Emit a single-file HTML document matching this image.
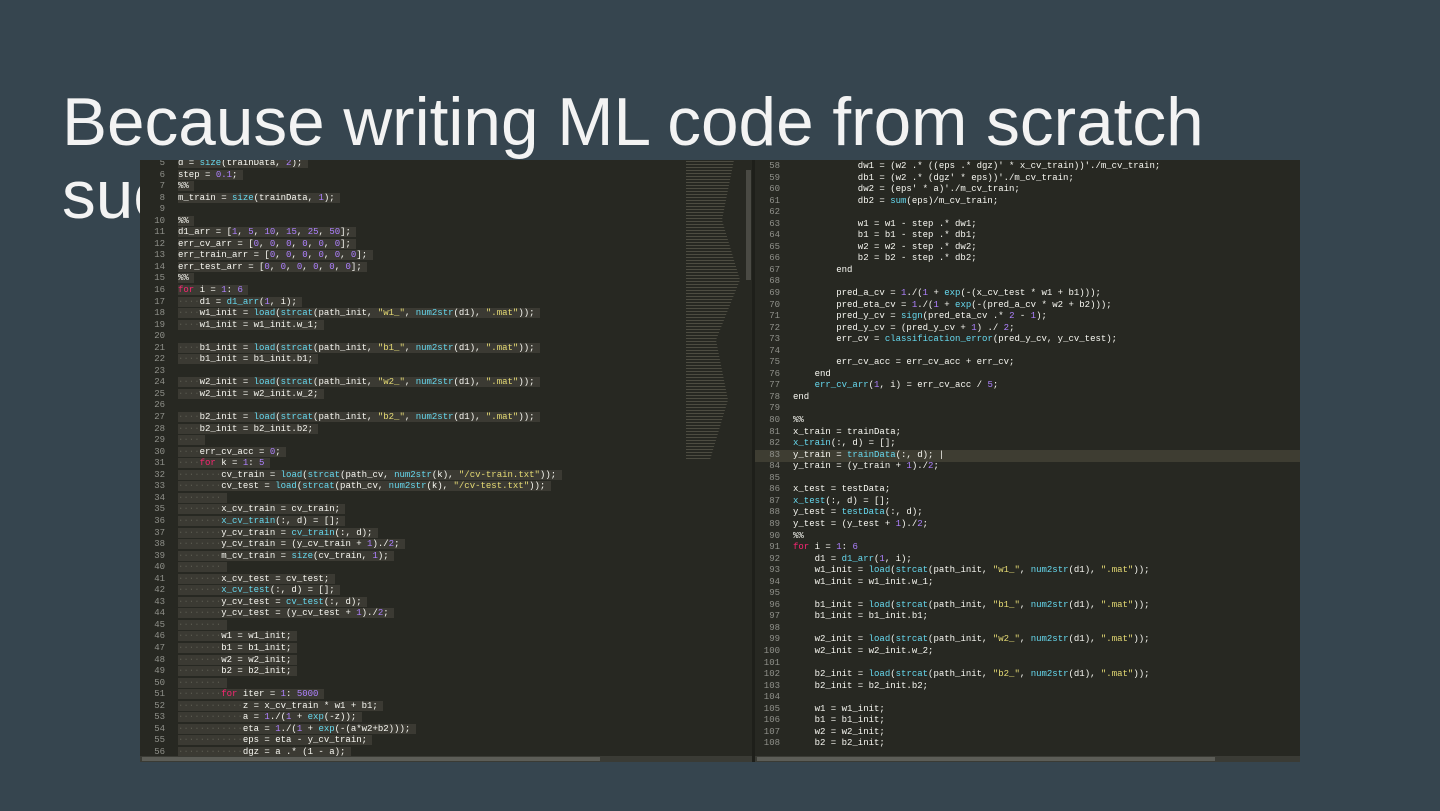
<!DOCTYPE html>
<html><head><meta charset="utf-8"><style>
html,body{margin:0;padding:0;width:1440px;height:811px;overflow:hidden;background:#36454f;}
.title{position:absolute;left:62px;top:86px;font:67.5px/73px "Liberation Sans",sans-serif;color:#f3f3f3;white-space:nowrap;}
.shot{position:absolute;left:140px;top:160px;width:1160px;height:602px;background:#272822;overflow:hidden;}
.pane{position:absolute;top:0;height:602px;overflow:hidden;background:#272822;}
pre{margin:0;font:9px/11.55px "Liberation Mono",monospace;color:#f8f8f2;position:absolute;white-space:pre;}
.ln{color:#8f908a;text-align:right;}
.f{color:#66d9ef}.n{color:#ae81ff}.s{color:#e6db74}.k{color:#f92672}.d{color:#5a5a50}
.sl{background:#3b3a33;}
</style></head><body>
<div class="title">Because writing ML code from scratch<br>suc</div>
<div class="shot">
 <div class="pane" style="left:0;width:612px;">
  <pre class="ln" style="left:0;width:25px;top:-2px;">5
6
7
8
9
10
11
12
13
14
15
16
17
18
19
20
21
22
23
24
25
26
27
28
29
30
31
32
33
34
35
36
37
38
39
40
41
42
43
44
45
46
47
48
49
50
51
52
53
54
55
56</pre>
  <pre style="left:38px;top:-2px;"><span class="sl">d = <span class="f">size</span>(trainData, <span class="n">2</span>); </span>
<span class="sl">step = <span class="n">0.1</span>; </span>
<span class="sl">%% </span>
<span class="sl">m_train = <span class="f">size</span>(trainData, <span class="n">1</span>); </span>

<span class="sl">%% </span>
<span class="sl">d1_arr = [<span class="n">1</span>, <span class="n">5</span>, <span class="n">10</span>, <span class="n">15</span>, <span class="n">25</span>, <span class="n">50</span>]; </span>
<span class="sl">err_cv_arr = [<span class="n">0</span>, <span class="n">0</span>, <span class="n">0</span>, <span class="n">0</span>, <span class="n">0</span>, <span class="n">0</span>]; </span>
<span class="sl">err_train_arr = [<span class="n">0</span>, <span class="n">0</span>, <span class="n">0</span>, <span class="n">0</span>, <span class="n">0</span>, <span class="n">0</span>]; </span>
<span class="sl">err_test_arr = [<span class="n">0</span>, <span class="n">0</span>, <span class="n">0</span>, <span class="n">0</span>, <span class="n">0</span>, <span class="n">0</span>]; </span>
<span class="sl">%% </span>
<span class="sl"><span class="k">for</span> i = <span class="n">1</span>: <span class="n">6</span> </span>
<span class="sl"><span class="d">····</span>d1 = <span class="f">d1_arr</span>(<span class="n">1</span>, i); </span>
<span class="sl"><span class="d">····</span>w1_init = <span class="f">load</span>(<span class="f">strcat</span>(path_init, <span class="s">"w1_"</span>, <span class="f">num2str</span>(d1), <span class="s">".mat"</span>)); </span>
<span class="sl"><span class="d">····</span>w1_init = w1_init.w_1; </span>

<span class="sl"><span class="d">····</span>b1_init = <span class="f">load</span>(<span class="f">strcat</span>(path_init, <span class="s">"b1_"</span>, <span class="f">num2str</span>(d1), <span class="s">".mat"</span>)); </span>
<span class="sl"><span class="d">····</span>b1_init = b1_init.b1; </span>

<span class="sl"><span class="d">····</span>w2_init = <span class="f">load</span>(<span class="f">strcat</span>(path_init, <span class="s">"w2_"</span>, <span class="f">num2str</span>(d1), <span class="s">".mat"</span>)); </span>
<span class="sl"><span class="d">····</span>w2_init = w2_init.w_2; </span>

<span class="sl"><span class="d">····</span>b2_init = <span class="f">load</span>(<span class="f">strcat</span>(path_init, <span class="s">"b2_"</span>, <span class="f">num2str</span>(d1), <span class="s">".mat"</span>)); </span>
<span class="sl"><span class="d">····</span>b2_init = b2_init.b2; </span>
<span class="sl"><span class="d">····</span> </span>
<span class="sl"><span class="d">····</span>err_cv_acc = <span class="n">0</span>; </span>
<span class="sl"><span class="d">····</span><span class="k">for</span> k = <span class="n">1</span>: <span class="n">5</span> </span>
<span class="sl"><span class="d">········</span>cv_train = <span class="f">load</span>(<span class="f">strcat</span>(path_cv, <span class="f">num2str</span>(k), <span class="s">"/cv-train.txt"</span>)); </span>
<span class="sl"><span class="d">········</span>cv_test = <span class="f">load</span>(<span class="f">strcat</span>(path_cv, <span class="f">num2str</span>(k), <span class="s">"/cv-test.txt"</span>)); </span>
<span class="sl"><span class="d">········</span> </span>
<span class="sl"><span class="d">········</span>x_cv_train = cv_train; </span>
<span class="sl"><span class="d">········</span><span class="f">x_cv_train</span>(:, d) = []; </span>
<span class="sl"><span class="d">········</span>y_cv_train = <span class="f">cv_train</span>(:, d); </span>
<span class="sl"><span class="d">········</span>y_cv_train = (y_cv_train + <span class="n">1</span>)./<span class="n">2</span>; </span>
<span class="sl"><span class="d">········</span>m_cv_train = <span class="f">size</span>(cv_train, <span class="n">1</span>); </span>
<span class="sl"><span class="d">········</span> </span>
<span class="sl"><span class="d">········</span>x_cv_test = cv_test; </span>
<span class="sl"><span class="d">········</span><span class="f">x_cv_test</span>(:, d) = []; </span>
<span class="sl"><span class="d">········</span>y_cv_test = <span class="f">cv_test</span>(:, d); </span>
<span class="sl"><span class="d">········</span>y_cv_test = (y_cv_test + <span class="n">1</span>)./<span class="n">2</span>; </span>
<span class="sl"><span class="d">········</span> </span>
<span class="sl"><span class="d">········</span>w1 = w1_init; </span>
<span class="sl"><span class="d">········</span>b1 = b1_init; </span>
<span class="sl"><span class="d">········</span>w2 = w2_init; </span>
<span class="sl"><span class="d">········</span>b2 = b2_init; </span>
<span class="sl"><span class="d">········</span> </span>
<span class="sl"><span class="d">········</span><span class="k">for</span> iter = <span class="n">1</span>: <span class="n">5000</span> </span>
<span class="sl"><span class="d">············</span>z = x_cv_train * w1 + b1; </span>
<span class="sl"><span class="d">············</span>a = <span class="n">1</span>./(<span class="n">1</span> + <span class="f">exp</span>(-z)); </span>
<span class="sl"><span class="d">············</span>eta = <span class="n">1</span>./(<span class="n">1</span> + <span class="f">exp</span>(-(a*w2+b2))); </span>
<span class="sl"><span class="d">············</span>eps = eta - y_cv_train; </span>
<span class="sl"><span class="d">············</span>dgz = a .* (1 - a); </span></pre>
  <div style="position:absolute;left:546px;top:0;width:60px;height:300px;opacity:.55;background:repeating-linear-gradient(#272822 0 1px,#6c6a5a 1px 2px,#272822 2px 3px);clip-path:polygon(0 0,80% 0,60% 20%,90% 40%,50% 60%,70% 80%,40% 100%,0 100%);"></div>
  <div style="position:absolute;left:606px;top:10px;width:5px;height:110px;background:#4a4a44;"></div>
  <div style="position:absolute;left:0;top:596px;width:612px;height:6px;background:#3a3b35;"></div>
  <div style="position:absolute;left:2px;top:597px;width:458px;height:4px;background:#5c5d57;"></div>
 </div>
 <div style="position:absolute;left:612px;top:0;width:3px;height:602px;background:#1e1f1a;"></div>
 <div class="pane" style="left:615px;width:545px;">
  <div style="position:absolute;left:0;top:290px;width:545px;height:12px;background:#3e3d32;"></div>
  <pre class="ln" style="left:0;width:25px;top:1px;">58
59
60
61
62
63
64
65
66
67
68
69
70
71
72
73
74
75
76
77
78
79
80
81
82
83
84
85
86
87
88
89
90
91
92
93
94
95
96
97
98
99
100
101
102
103
104
105
106
107
108</pre>
  <pre style="left:38px;top:1px;">            dw1 = (w2 .* ((eps .* dgz)' * x_cv_train))'./m_cv_train;
            db1 = (w2 .* (dgz' * eps))'./m_cv_train;
            dw2 = (eps' * a)'./m_cv_train;
            db2 = <span class="f">sum</span>(eps)/m_cv_train;

            w1 = w1 - step .* dw1;
            b1 = b1 - step .* db1;
            w2 = w2 - step .* dw2;
            b2 = b2 - step .* db2;
        end

        pred_a_cv = <span class="n">1</span>./(<span class="n">1</span> + <span class="f">exp</span>(-(x_cv_test * w1 + b1)));
        pred_eta_cv = <span class="n">1</span>./(<span class="n">1</span> + <span class="f">exp</span>(-(pred_a_cv * w2 + b2)));
        pred_y_cv = <span class="f">sign</span>(pred_eta_cv .* <span class="n">2</span> - <span class="n">1</span>);
        pred_y_cv = (pred_y_cv + <span class="n">1</span>) ./ <span class="n">2</span>;
        err_cv = <span class="f">classification_error</span>(pred_y_cv, y_cv_test);

        err_cv_acc = err_cv_acc + err_cv;
    end
    <span class="f">err_cv_arr</span>(<span class="n">1</span>, i) = err_cv_acc / <span class="n">5</span>;
end

%%
x_train = trainData;
<span class="f">x_train</span>(:, d) = [];
y_train = <span class="f">trainData</span>(:, d); |
y_train = (y_train + <span class="n">1</span>)./<span class="n">2</span>;

x_test = testData;
<span class="f">x_test</span>(:, d) = [];
y_test = <span class="f">testData</span>(:, d);
y_test = (y_test + <span class="n">1</span>)./<span class="n">2</span>;
%%
<span class="k">for</span> i = <span class="n">1</span>: <span class="n">6</span>
    d1 = <span class="f">d1_arr</span>(<span class="n">1</span>, i);
    w1_init = <span class="f">load</span>(<span class="f">strcat</span>(path_init, <span class="s">"w1_"</span>, <span class="f">num2str</span>(d1), <span class="s">".mat"</span>));
    w1_init = w1_init.w_1;

    b1_init = <span class="f">load</span>(<span class="f">strcat</span>(path_init, <span class="s">"b1_"</span>, <span class="f">num2str</span>(d1), <span class="s">".mat"</span>));
    b1_init = b1_init.b1;

    w2_init = <span class="f">load</span>(<span class="f">strcat</span>(path_init, <span class="s">"w2_"</span>, <span class="f">num2str</span>(d1), <span class="s">".mat"</span>));
    w2_init = w2_init.w_2;

    b2_init = <span class="f">load</span>(<span class="f">strcat</span>(path_init, <span class="s">"b2_"</span>, <span class="f">num2str</span>(d1), <span class="s">".mat"</span>));
    b2_init = b2_init.b2;

    w1 = w1_init;
    b1 = b1_init;
    w2 = w2_init;
    b2 = b2_init;</pre>
  <div style="position:absolute;left:0;top:596px;width:545px;height:6px;background:#3a3b35;"></div>
  <div style="position:absolute;left:2px;top:597px;width:458px;height:4px;background:#5c5d57;"></div>
 </div>
</div>
</body></html>
